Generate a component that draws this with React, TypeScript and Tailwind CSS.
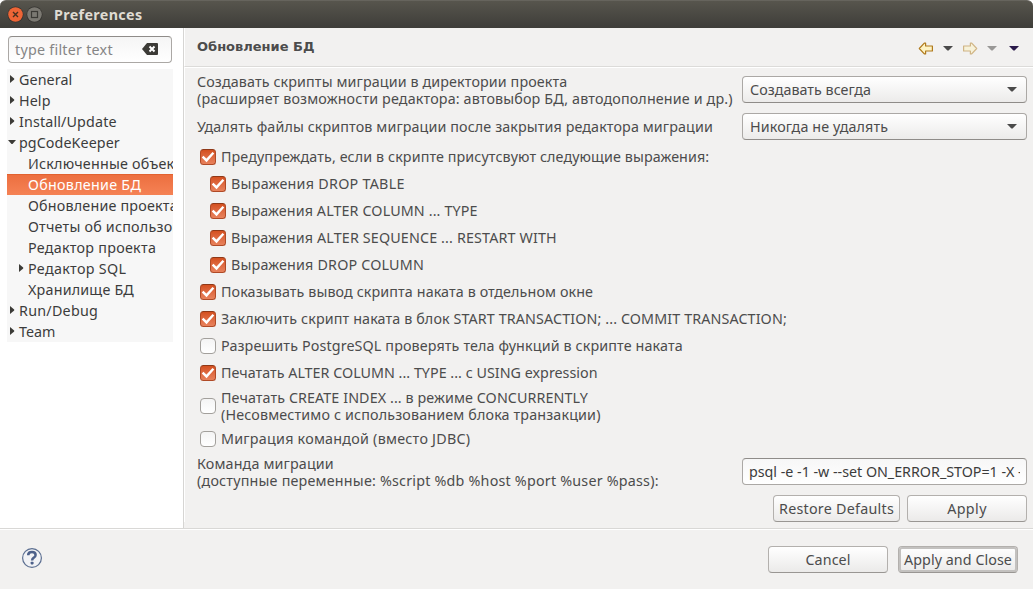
import type { ReactNode } from "react";

function Caret({ className = "text-[#3c3b37]" }: { className?: string }) {
  return (
    <svg width="10" height="5" viewBox="0 0 10 5" className={`block shrink-0 ${className}`}>
      <path d="M0 0H10L5.6 4.6H4.4Z" fill="currentColor" />
    </svg>
  );
}

function BackArrow({ className = "" }: { className?: string }) {
  return (
    <svg width="15" height="13" viewBox="0 0 15 13" className={`block shrink-0 ${className}`}>
      <path
        d="M1.3 6.5L6.3 1.1H7.6V4H14.4V9H7.6V11.9H6.3Z"
        fill="#fdf3c4"
        stroke="#b07a1c"
        strokeWidth="1.2"
        strokeLinejoin="round"
      />
    </svg>
  );
}

function CheckBox({ checked }: { checked: boolean }) {
  return checked ? (
    <span className="flex size-4 shrink-0 items-center justify-center rounded-[3.5px] border border-[#b04a26] border-t-[#8f3817] bg-linear-to-b from-[#d4501f] to-[#e8825c]">
      <svg width="14" height="14" viewBox="0 0 14 14" className="block shrink-0">
        <path d="M1.6 6.6L5.5 10.4L12.4 2.8" fill="none" stroke="#fff" strokeWidth="2.4" />
      </svg>
    </span>
  ) : (
    <span className="size-4 shrink-0 rounded-[4px] border border-[#a3a09c] bg-linear-to-b from-[#f4f4f4] to-white" />
  );
}

type Option = { text: ReactNode; checked: boolean; nested?: boolean; tall?: boolean; tracking: string };

const options: Option[] = [
  { text: "Предупреждать, если в скрипте присутсвуют следующие выражения:", checked: true, tracking: "tracking-[0.1px]" },
  { text: "Выражения DROP TABLE", checked: true, nested: true, tracking: "tracking-[0.27px]" },
  { text: "Выражения ALTER COLUMN ... TYPE", checked: true, nested: true, tracking: "tracking-[0.13px]" },
  { text: "Выражения ALTER SEQUENCE ... RESTART WITH", checked: true, nested: true, tracking: "tracking-[0.15px]" },
  { text: "Выражения DROP COLUMN", checked: true, nested: true, tracking: "tracking-[0.19px]" },
  { text: "Показывать вывод скрипта наката в отдельном окне", checked: true, tracking: "tracking-[0.11px]" },
  { text: "Заключить скрипт наката в блок START TRANSACTION; ... COMMIT TRANSACTION;", checked: true, tracking: "tracking-[0.12px]" },
  { text: "Разрешить PostgreSQL проверять тела функций в скрипте наката", checked: false, tracking: "tracking-[0.13px]" },
  { text: "Печатать ALTER COLUMN ... TYPE ... с USING expression", checked: true, tracking: "tracking-[0.02px]" },
  {
    text: (
      <>
        <span className="tracking-[0.095px]">Печатать CREATE INDEX ... в режиме CONCURRENTLY</span>
        <br />
        <span>(Несовместимо с использованием блока транзакции)</span>
      </>
    ),
    checked: false,
    tall: true,
    tracking: "tracking-[0.15px]",
  },
  { text: "Миграция командой (вместо JDBC)", checked: false, tracking: "tracking-[0.25px]" },
];

type Node = { label: string; child?: boolean; arrow?: "right" | "down"; selected?: boolean; tracking: string };

const tree: Node[] = [
  { label: "General", arrow: "right", tracking: "tracking-[0.1px]" },
  { label: "Help", arrow: "right", tracking: "tracking-[0.1px]" },
  { label: "Install/Update", arrow: "right", tracking: "tracking-[0.14px]" },
  { label: "pgCodeKeeper", arrow: "down", tracking: "tracking-[0.08px]" },
  { label: "Исключенные объекты", child: true, tracking: "tracking-[0.22px]" },
  { label: "Обновление БД", child: true, selected: true, tracking: "tracking-[0.28px]" },
  { label: "Обновление проекта", child: true, tracking: "tracking-[0.2px]" },
  { label: "Отчеты об использовании", child: true, tracking: "tracking-[0.22px]" },
  { label: "Редактор проекта", child: true, tracking: "tracking-[0.27px]" },
  { label: "Редактор SQL", child: true, arrow: "right", tracking: "tracking-[0.33px]" },
  { label: "Хранилище БД", child: true, tracking: "tracking-[0.2px]" },
  { label: "Run/Debug", arrow: "right", tracking: "tracking-[0.26px]" },
  { label: "Team", arrow: "right", tracking: "tracking-[0px]" },
];

function TreeRow({ node }: { node: Node }) {
  return (
    <li
      className={`flex h-[21px] items-center whitespace-nowrap ${node.child ? "pl-[9px]" : ""} ${
        node.selected ? "bg-linear-to-b from-[#ec6e3e] to-[#f58255] text-white shadow-[inset_0_1px_0_#e2622f]" : ""
      }`}
    >
      <span className="flex w-3 shrink-0 items-center pl-[1px]">
        {node.arrow === "right" && (
          <svg width="5" height="8" viewBox="0 0 5 8" className="mb-[1px] ml-[2px] block">
            <path d="M0 0L4.2 3.5V4.5L0 8Z" fill="#3c3b37" />
          </svg>
        )}
        {node.arrow === "down" && (
          <svg width="8" height="5" viewBox="0 0 8 5" className="block">
            <path d="M0 0H8L4.5 4H3.5Z" fill="#3c3b37" />
          </svg>
        )}
      </span>
      <span className={node.tracking}>{node.label}</span>
    </li>
  );
}

function Select({ children }: { children: ReactNode }) {
  return (
    <div className="flex h-[27px] w-[285px] shrink-0 items-center justify-between rounded-[4px] border border-[#aba8a5] border-b-[#8f8c89] bg-linear-to-b from-white to-[#ecebea] pr-[9px] pl-[7px]">
      {children}
      <Caret className="text-[#4a4a4a]" />
    </div>
  );
}

function Button({ children, className }: { children: ReactNode; className: string }) {
  return (
    <button
      className={`flex h-[27px] shrink-0 items-center justify-center rounded-[4px] border border-[#b3b0ad] border-b-[#999693] bg-linear-to-b from-white to-[#ebeae9] whitespace-nowrap ${className}`}
    >
      {children}
    </button>
  );
}

export default function App() {
  return (
    <div className="flex h-[589px] w-[1033px] flex-col overflow-hidden bg-[#f2f1f0] font-['Noto_Sans',sans-serif] text-[14.3px] leading-[17px] text-[#4c4c4c]">
      <header className="h-7 shrink-0 bg-white">
        <div className="flex h-full items-center rounded-t-[6px] border-t border-[#66645d] bg-linear-to-b from-[#57554d] to-[#3e3d39] pl-[7px]">
          <svg width="36" height="17" viewBox="0 0 36 17" className="block">
            <circle cx="8.5" cy="8.5" r="8" fill="#34332f" />
            <circle cx="8.5" cy="8.5" r="7.3" fill="#ee6536" />
            <path d="M6 6L11 11M11 6L6 11" stroke="#47301f" strokeWidth="1.4" />
            <circle cx="27.5" cy="8.5" r="8" fill="#34332f" />
            <circle cx="27.5" cy="8.5" r="7.3" fill="#7b7972" />
            <rect x="24.5" y="5.5" width="6" height="6" fill="none" stroke="#3b3a35" strokeWidth="1.2" />
          </svg>
          <h1 className="ml-[11px] font-bold tracking-[0.35px] text-[#dfdbd2]">Preferences</h1>
        </div>
      </header>

      <div className="flex h-[500px] shrink-0">
        <aside className="w-[183px] shrink-0 overflow-hidden bg-white pt-2 pl-[7px]">
          <div className="ml-[1px] flex h-[27px] w-[164px] items-center justify-between rounded-[4px] border border-[#aba8a5] border-t-[#8f8c89] bg-linear-to-b from-[#f5f5f5] to-white pr-[13px] pl-[6px]">
            <span className="tracking-[0.25px] text-[#858585]">type filter text</span>
            <svg width="16" height="12" viewBox="0 0 16 12" className="mb-[1px] block">
              <path d="M5 0H15Q16 0 16 1V11Q16 12 15 12H5L0 6Z" fill="#3c3b37" />
              <path d="M7.5 3.5L12.5 8.5M12.5 3.5L7.5 8.5" stroke="#fff" strokeWidth="2" />
            </svg>
          </div>
          <ul className="mt-[6px] w-[166px] overflow-hidden bg-[#f7f7f7] text-[#3c3c3c]">
            {tree.map((node) => (
              <TreeRow key={node.label} node={node} />
            ))}
          </ul>
        </aside>

        <main className="min-w-0 flex-1 border-l border-[#d6d5d3]">
          <div className="flex h-[39px] items-center justify-between border-b border-l border-b-[#dcdbd9] border-l-white pr-[14px] pl-[12px]">
            <h2 className="mb-[2px] font-['DejaVu_Sans',sans-serif] text-[13px] font-bold">Обновление БД</h2>
            <div className="flex items-center pt-[2px]">
              <BackArrow />
              <Caret className="ml-[10px] text-[#4a4a4a]" />
              <BackArrow className="ml-[10px] -scale-x-100 opacity-50" />
              <Caret className="ml-[9px] text-[#999896]" />
              <Caret className="ml-[12px] text-[#2a1a4a]" />
            </div>
          </div>

          <div className="border-t border-l border-white pl-[12px]">
            <div className="flex h-[43px] items-center justify-between pr-[6px]">
              <p className="pt-[1px] whitespace-nowrap">
                <span className="tracking-[0.115px]">Создавать скрипты миграции в директории проекта</span>
                <br />
                <span className="tracking-[0.15px]">(расширяет возможности редактора: автовыбор БД, автодополнение и др.)</span>
              </p>
              <Select>
                <span className="tracking-[0.03px]">Создавать всегда</span>
              </Select>
            </div>
            <div className="flex h-[31px] items-center justify-between pr-[6px]">
              <p className="tracking-[0.11px] whitespace-nowrap">Удалять файлы скриптов миграции после закрытия редактора миграции</p>
              <Select>
                <span className="tracking-[0.12px]">Никогда не удалять</span>
              </Select>
            </div>
            <div className="mt-[1px]">
              {options.map((option, i) => (
                <label
                  key={i}
                  className={`flex items-center gap-[5px] whitespace-nowrap ${option.nested ? "pl-[13px]" : "pl-[3px]"} ${
                    option.tall ? "h-[39px]" : "h-[27px]"
                  }`}
                >
                  <CheckBox checked={option.checked} />
                  <span className={option.tracking}>{option.text}</span>
                </label>
              ))}
            </div>
            <div className="mt-[6px] flex h-[27px] items-center justify-between pr-[6px]">
              <p className="whitespace-nowrap">
                <span className="tracking-[0.15px]">Команда миграции</span>
                <br />
                <span className="tracking-[0.21px]">(доступные переменные: %script %db %host %port %user %pass):</span>
              </p>
              <div className="flex h-[27px] w-[285px] shrink-0 items-center rounded-[4px] border border-[#aba8a5] border-t-[#8f8c89] bg-linear-to-b from-[#f7f7f7] to-white px-[6px] text-[#3c3c3c]">
                <span className="w-full overflow-hidden tracking-[-0.02px] whitespace-nowrap">psql -e -1 -w --set ON_ERROR_STOP=1 -X -</span>
              </div>
            </div>
            <div className="mt-[10px] flex justify-end gap-[7px] pr-[6px]">
              <Button className="w-[127px] tracking-[0.25px]">Restore Defaults</Button>
              <Button className="w-[120px] tracking-[0.4px]">Apply</Button>
            </div>
          </div>
        </main>
      </div>

      <footer className="flex flex-1 items-start justify-between border-t border-[#d9d8d6] pt-[17px] pr-[15px] pl-[21px] shadow-[inset_0_1px_0_#fff]">
        <svg width="22" height="22" viewBox="0 0 22 22" className="mt-[1px] block">
          <circle cx="11" cy="11" r="9.4" fill="#f1f2f5" stroke="#5c6f91" strokeWidth="1.2" />
          <path d="M7.2 8.2Q7.2 5 11 5Q14.6 5 14.6 7.9Q14.6 9.6 12.8 10.6Q11.1 11.6 11.1 13.4" fill="none" stroke="#4c608a" strokeWidth="2.5" />
          <rect x="9.6" y="14.8" width="3" height="2.6" rx="0.8" fill="#4c608a" />
        </svg>
        <div className="flex gap-[10px]">
          <Button className="w-[120px] tracking-[0.1px]">Cancel</Button>
          <Button className="w-[120px] tracking-[0.06px] shadow-[inset_0_0_0_2px_#c3c1bf]">Apply and Close</Button>
        </div>
      </footer>
    </div>
  );
}
